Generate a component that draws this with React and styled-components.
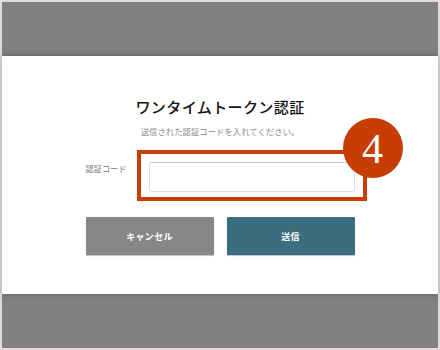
import React from "react";
import styled, { createGlobalStyle } from "styled-components";

const Global = createGlobalStyle`
  html, body { margin: 0; padding: 0; }
  body {
    width: 440px;
    height: 350px;
    background: #e3dbd9;
    font-family: "Noto Sans CJK JP", "Noto Sans", sans-serif;
  }
`;

const Frame = styled.div`
  width: 440px;
  height: 350px;
  box-sizing: border-box;
  padding: 2px;
  display: flex;
`;

const Screen = styled.div`
  flex: 1;
  background: #808080;
  display: flex;
  flex-direction: column;
  justify-content: center;
`;

const Panel = styled.div`
  height: 238px;
  background: #ffffff;
  box-shadow: 0 0 4px rgba(0, 0, 0, 0.35);
  display: flex;
  flex-direction: column;
  align-items: center;
  box-sizing: border-box;
  padding-top: 41px;
`;

const Title = styled.h1`
  margin: 0;
  font-size: 15px;
  line-height: 20px;
  font-weight: 500;
  letter-spacing: 0.4px;
  color: #111;
`;

const Subtitle = styled.p`
  margin: 8px 0 0;
  font-size: 8.4px;
  line-height: 12px;
  color: #8a8a8a;
`;

const Form = styled.div`
  width: 269px;
  margin-top: 25px;
  display: flex;
  flex-direction: column;
  gap: 25px;
`;

const FieldRow = styled.div`
  display: grid;
  grid-template-columns: 63px 1fr;
  align-items: start;
`;

const Label = styled.label`
  font-size: 8.2px;
  line-height: 13px;
  color: #777;
`;

const InputWrap = styled.div`
  position: relative;
  height: 30px;
`;

const Input = styled.input`
  display: block;
  width: 100%;
  height: 30px;
  box-sizing: border-box;
  border: 1px solid #dedede;
  border-top-color: #c8c8c8;
  border-radius: 2px;
  background: #fff;
  outline: none;
`;

const Highlight = styled.div`
  position: absolute;
  top: -12px;
  left: -11.5px;
  right: -12.5px;
  bottom: -9px;
  border: 4px solid #c63e02;
  pointer-events: none;
`;

const Badge = styled.div`
  position: absolute;
  left: 194px;
  top: -44px;
  width: 60px;
  height: 60px;
  border-radius: 50%;
  background: #c63e02;
  color: #fff;
  display: flex;
  align-items: center;
  justify-content: center;
  font-family: "Liberation Serif", "DejaVu Serif", serif;
  font-size: 42px;
  line-height: 1;
  padding-top: 2px;
  box-sizing: border-box;
`;

const Buttons = styled.div`
  display: grid;
  grid-template-columns: 1fr 1fr;
  gap: 13px;
`;

const Button = styled.button`
  height: 38px;
  border: none;
  border-radius: 1px;
  background: ${(p) => (p.$primary ? "#3a6e7e" : "#878787")};
  box-shadow: 0 1px 1px rgba(0, 0, 0, 0.25);
  color: #fff;
  font-family: "Noto Sans CJK JP", "Noto Sans", sans-serif;
  font-size: 9px;
  font-weight: 700;
  letter-spacing: 0.3px;
  padding: 0;
`;

export default function App() {
  return (
    <>
      <Global />
      <Frame>
        <Screen>
          <Panel>
            <Title>ワンタイムトークン認証</Title>
            <Subtitle>送信された認証コードを入れてください。</Subtitle>
            <Form>
              <FieldRow>
                <Label>認証コード</Label>
                <InputWrap>
                  <Input type="text" />
                  <Highlight />
                  <Badge>4</Badge>
                </InputWrap>
              </FieldRow>
              <Buttons>
                <Button>キャンセル</Button>
                <Button $primary>送信</Button>
              </Buttons>
            </Form>
          </Panel>
        </Screen>
      </Frame>
    </>
  );
}
